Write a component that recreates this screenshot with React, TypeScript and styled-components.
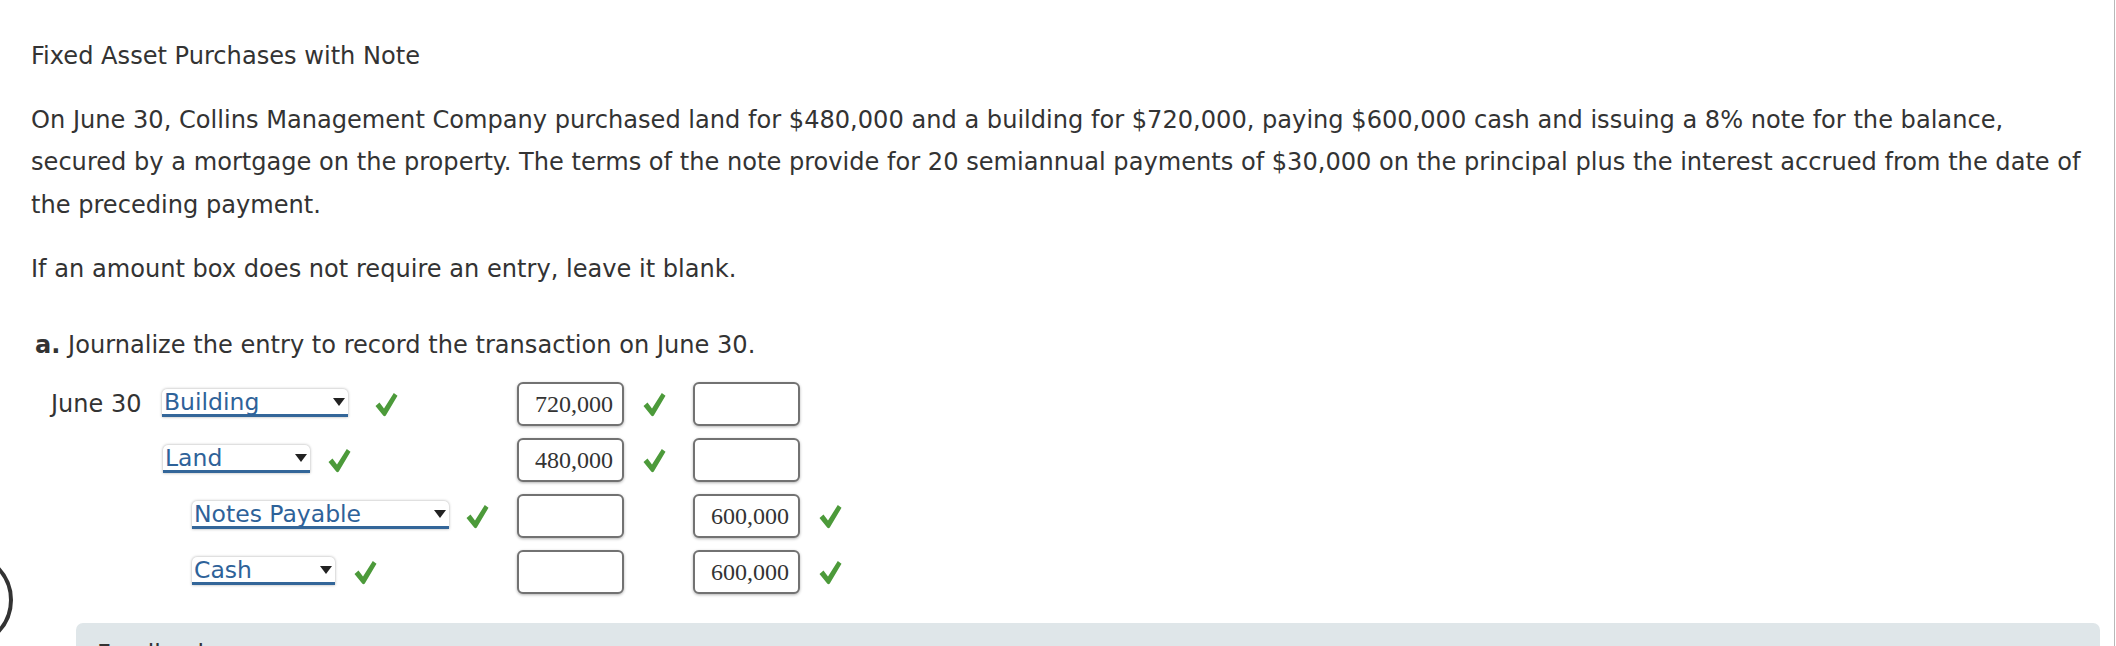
import React from "react";
import styled, { createGlobalStyle } from "styled-components";

const GlobalStyle = createGlobalStyle`
  html, body {
    margin: 0;
    padding: 0;
    background: #ffffff;
  }
  body {
    font-family: "DejaVu Sans", Verdana, sans-serif;
    color: #333333;
  }
`;

const Page = styled.div`
  position: relative;
  box-sizing: border-box;
  width: 2115px;
  height: 646px;
  overflow: hidden;
  border-right: 1px solid #b8b8b8;
  background: #ffffff;
`;

const Content = styled.div`
  padding: 35px 0 0 31px;
  font-size: 24.1px;
  line-height: 42.5px;
`;

const Title = styled.div`
  margin: 0;
`;

const Para = styled.p<{ $top: number }>`
  margin: ${(p) => p.$top}px 0 0 0;
  white-space: nowrap;
`;

const PartHeading = styled.p`
  margin: 33px 0 0 4px;
`;

const Bold = styled.b`
  font-weight: bold;
`;

const Journal = styled.div`
  display: grid;
  grid-template-columns: 111px 355px 107px 69px 107px 60px;
  grid-auto-rows: 44px;
  row-gap: 12px;
  align-items: center;
  margin: 16px 0 0 20px;
`;

const DateCell = styled.div`
  font-size: 24px;
  line-height: 44px;
`;

const AccountCell = styled.div<{ $indent: number }>`
  display: flex;
  align-items: center;
  padding-left: ${(p) => p.$indent}px;
`;

const Select = styled.div<{ $w: number }>`
  position: relative;
  box-sizing: border-box;
  width: ${(p) => p.$w}px;
  height: 28px;
  margin-top: -2px;
  background: #ffffff;
  border-radius: 5px 5px 0 0;
  box-shadow: 0 0 3px rgba(0, 0, 0, 0.35);
  border-bottom: 3px solid #336699;
  color: #2e6299;
  font-size: 23.5px;
  line-height: 24px;
  padding-left: 2px;
  display: flex;
  align-items: center;
  justify-content: space-between;
  white-space: nowrap;
`;

const Arrow = styled.span`
  width: 0;
  height: 0;
  margin-right: 3px;
  border-left: 6px solid transparent;
  border-right: 6px solid transparent;
  border-top: 8px solid #222;
`;

const CheckWrap = styled.span<{ $gap: number }>`
  display: inline-flex;
  margin-left: ${(p) => p.$gap}px;
`;

const AmountBox = styled.div`
  box-sizing: border-box;
  width: 107px;
  height: 44px;
  border: 2px solid #727272;
  border-radius: 6px;
  box-shadow: 0 1px 3px rgba(0, 0, 0, 0.3);
  background: #fff;
  font-family: "Liberation Serif", "Times New Roman", serif;
  font-size: 24px;
  color: #333;
  text-align: right;
  padding-right: 9px;
  line-height: 40px;
`;

const CheckCell = styled.div`
  display: flex;
  align-items: center;
  padding-left: 19px;
`;

const Feedback = styled.div`
  margin: 29px 14px 0 76px;
  height: 120px;
  background: #dfe6e9;
  border-radius: 7px;
  padding: 16px 21px;
  font-size: 24px;
  line-height: 30px;
  color: #333;
`;

const Circle = styled.div`
  position: absolute;
  left: -83px;
  top: 552px;
  width: 96px;
  height: 96px;
  box-sizing: border-box;
  border: 4px solid #333;
  border-radius: 50%;
`;

const Check: React.FC = () => (
  <svg width="23" height="25" viewBox="0 0 23 25">
    <path
      d="M0.5 14 L4.5 10.5 L9 16.5 L18.8 1 L22.5 3.8 L10.8 23.5 Q9.6 24.8 8.2 23.6 Z"
      fill="#4c9a3a"
    />
  </svg>
);

type Row = {
  date?: string;
  account: string;
  width: number;
  indent: number;
  gap: number;
  debit?: string;
  credit?: string;
};

const rows: Row[] = [
  { date: "June 30", account: "Building", width: 186, indent: 0, gap: 27, debit: "720,000" },
  { account: "Land", width: 147, indent: 1, gap: 18, debit: "480,000" },
  { account: "Notes Payable", width: 257, indent: 30, gap: 17, credit: "600,000" },
  { account: "Cash", width: 143, indent: 30, gap: 19, credit: "600,000" },
];

export default function App() {
  return (
    <Page>
      <GlobalStyle />
      <Content>
        <Title>Fixed Asset Purchases with Note</Title>
        <Para $top={21}>
          On June 30, Collins Management Company purchased land for $480,000 and a building for $720,000, paying $600,000 cash and issuing a 8% note for the balance,
          <br />
          secured by a mortgage on the property. The terms of the note provide for 20 semiannual payments of $30,000 on the principal plus the interest accrued from the date of
          <br />
          the preceding payment.
        </Para>
        <Para $top={22}>If an amount box does not require an entry, leave it blank.</Para>
        <PartHeading>
          <Bold>a.</Bold> Journalize the entry to record the transaction on June 30.
        </PartHeading>
        <Journal>
          {rows.map((r, i) => (
            <React.Fragment key={i}>
              <DateCell>{r.date ?? ""}</DateCell>
              <AccountCell $indent={r.indent}>
                <Select $w={r.width}>
                  <span>{r.account}</span>
                  <Arrow />
                </Select>
                <CheckWrap $gap={r.gap}>
                  <Check />
                </CheckWrap>
              </AccountCell>
              <AmountBox>{r.debit ?? ""}</AmountBox>
              <CheckCell>{r.debit ? <Check /> : null}</CheckCell>
              <AmountBox>{r.credit ?? ""}</AmountBox>
              <CheckCell>{r.credit ? <Check /> : null}</CheckCell>
            </React.Fragment>
          ))}
        </Journal>
      </Content>
      <Feedback>Feedback</Feedback>
      <Circle />
    </Page>
  );
}
